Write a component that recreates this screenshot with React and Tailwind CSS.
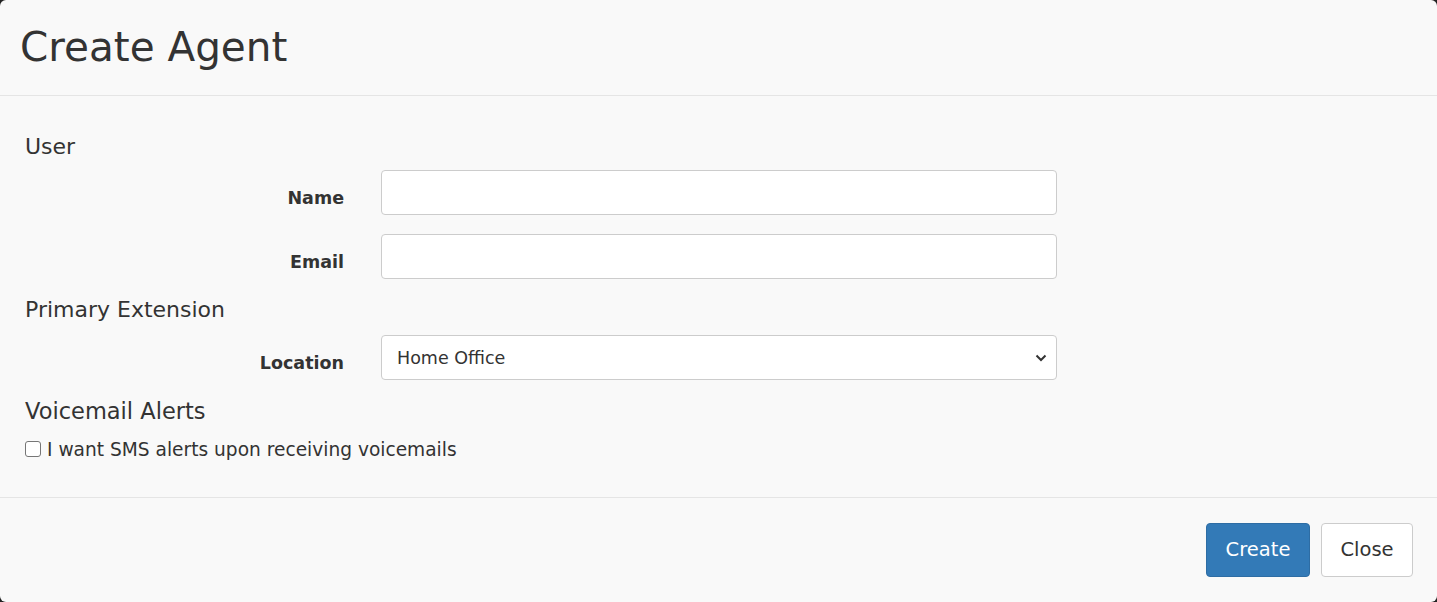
import React from "react";

const font = { fontFamily: '"DejaVu Sans", sans-serif' };

function Row({ label, children, className = "" }) {
  return (
    <div className={"flex items-start " + className}>
      <div className="w-[344px] shrink-0 pt-[17px] text-right text-[17.5px] font-bold leading-[22px] text-[#333]">
        {label}
      </div>
      <div className="ml-[37px] w-[676px]">{children}</div>
    </div>
  );
}

export default function App() {
  return (
    <div className="h-[602px] w-[1437px] bg-[#222]" style={font}>
      <div className="flex h-[602px] w-[1437px] flex-col overflow-hidden rounded-[6px] bg-[#f9f9f9] text-[#333]">
        <div className="flex h-[96px] shrink-0 items-center border-b border-[#e5e5e5] pl-[20px]">
          <h4 className="text-[40.5px] font-normal leading-none">Create Agent</h4>
        </div>
        <div className="flex flex-col px-[25px] pt-[39px] pb-[36px]">
          <div className="h-[24px] text-[22px] leading-[24px]">User</div>
          <div className="-ml-[25px]">
            <Row label="Name" className="mt-[11px]">
              <input className="h-[45px] w-full rounded-[4px] border border-[#ccc] bg-white px-3 outline-none" />
            </Row>
            <Row label="Email" className="mt-[19px]">
              <input className="h-[45px] w-full rounded-[4px] border border-[#ccc] bg-white px-3 outline-none" />
            </Row>
          </div>
          <div className="mt-[19px] h-[24px] text-[22px] leading-[24px]">Primary Extension</div>
          <div className="-ml-[25px]">
            <Row label="Location" className="mt-[13px]">
              <div className="relative flex h-[45px] w-full items-center rounded-[4px] border border-[#ccc] bg-white pl-[15px] pt-[2px] text-[17.5px]">
                <span>Home Office</span>
                <svg className="absolute right-[9px] top-1/2 -translate-y-1/2" width="12" height="8" viewBox="0 0 12 8">
                  <path d="M1.5 1.5 L6 6 L10.5 1.5" fill="none" stroke="#333" strokeWidth="2" />
                </svg>
              </div>
            </Row>
          </div>
          <div className="mt-[19px] h-[24px] text-[22.5px] leading-[24px]">Voicemail Alerts</div>
          <div className="mt-[14px] flex h-[24px] items-center">
            <span className="inline-block h-[16px] w-[16px] rounded-[3px] border-[1.5px] border-[#767676] bg-white" />
            <span className="ml-[6px] pt-[1px] text-[18.6px]">I want SMS alerts upon receiving voicemails</span>
          </div>
        </div>
        <div className="flex flex-1 items-center justify-end gap-[11px] border-t border-[#e5e5e5] pr-[24px]">
          <button className="h-[54px] w-[104px] rounded-[4px] border border-[#2e6da4] bg-[#337ab7] text-[19.5px] text-white">
            Create
          </button>
          <button className="h-[54px] w-[92px] rounded-[4px] border border-[#ccc] bg-white text-[19.5px] text-[#333]">
            Close
          </button>
        </div>
      </div>
    </div>
  );
}
